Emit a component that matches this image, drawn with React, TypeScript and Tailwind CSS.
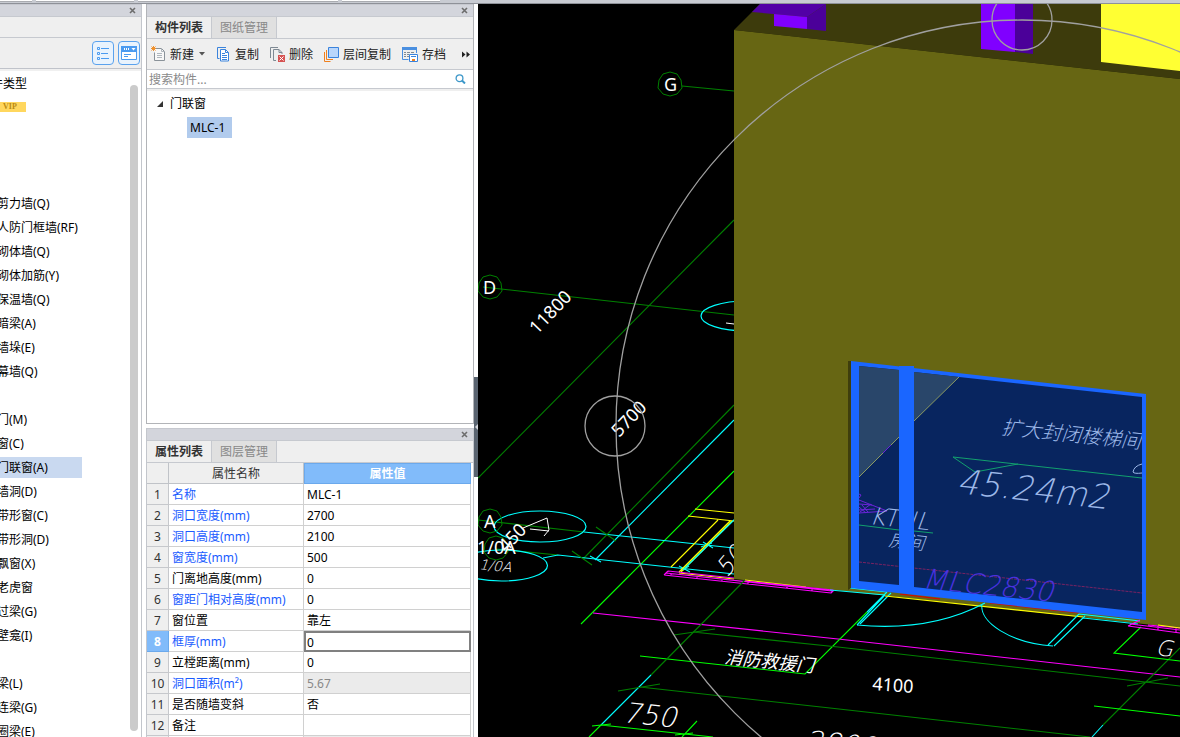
import type { ReactNode } from "react";

type Property = {
  name: string;
  value: string;
  common?: boolean;
  readOnly?: boolean;
};

const properties: Property[] = [
  { name: "名称", value: "MLC-1", common: true },
  { name: "洞口宽度(mm)", value: "2700", common: true },
  { name: "洞口高度(mm)", value: "2100", common: true },
  { name: "窗宽度(mm)", value: "500", common: true },
  { name: "门离地高度(mm)", value: "0" },
  { name: "窗距门相对高度(mm)", value: "0", common: true },
  { name: "窗位置", value: "靠左" },
  { name: "框厚(mm)", value: "0", common: true },
  { name: "立樘距离(mm)", value: "0" },
  { name: "洞口面积(m²)", value: "5.67", common: true, readOnly: true },
  { name: "是否随墙变斜", value: "否" },
  { name: "备注", value: "" },
  { name: "", value: "", readOnly: true },
];

const selectedRow = 7;

// an empty string keeps the height of a collapsed group header
const componentTypes = [
  "",
  "",
  "",
  "剪力墙(Q)",
  "人防门框墙(RF)",
  "砌体墙(Q)",
  "砌体加筋(Y)",
  "保温墙(Q)",
  "暗梁(A)",
  "墙垛(E)",
  "幕墙(Q)",
  "",
  "门(M)",
  "窗(C)",
  "门联窗(A)",
  "墙洞(D)",
  "带形窗(C)",
  "带形洞(D)",
  "飘窗(X)",
  "老虎窗",
  "过梁(G)",
  "壁龛(I)",
  "",
  "梁(L)",
  "连梁(G)",
  "圈梁(E)",
];

function TitleBar() {
  return (
    <div className="flex h-3 shrink-0 items-center justify-end border-t border-[#c6c8cf] bg-[#d3d5dc] pr-[5px]">
      <button type="button" aria-label="关闭" className="text-[#6d6d6d]">
        <svg className="block h-[7px] w-[7px]" viewBox="0 0 7 7" fill="none">
          <path d="M1 1l5 5M6 1L1 6" stroke="currentColor" strokeWidth="1.6" />
        </svg>
      </button>
    </div>
  );
}

function Tabs({ active, inactive }: { active: string; inactive: string }) {
  return (
    <div className="flex h-[23px] shrink-0 border-y border-[#c6c9cf] bg-[#efefef]">
      <button type="button" className="px-2 font-bold text-[#333]">
        {active}
      </button>
      <button
        type="button"
        className="border-x border-[#c6c9cf] bg-[#e0e0e0] px-2 text-[#888]"
      >
        {inactive}
      </button>
    </div>
  );
}

function ToolButton({ label, children }: { label: string; children: ReactNode }) {
  return (
    <button type="button" className="flex items-center gap-1 whitespace-nowrap">
      {children}
      <span className="pt-[2px]">{label}</span>
    </button>
  );
}

function TypePanel() {
  return (
    <aside className="flex w-[142px] shrink-0 flex-col overflow-hidden border-r border-[#c3c6cc] bg-white">
      <TitleBar />
      <div className="h-[22px] shrink-0 border-y border-[#c6c9cf] bg-[#efefef]" />
      <div className="flex h-[31px] shrink-0 items-center justify-end gap-1 border-b border-[#c0c3ca] bg-[#efefef] pr-[1px]">
        <button
          type="button"
          aria-label="列表视图"
          className="flex h-6 w-[22px] items-center justify-center rounded-[4px] border border-[#5aa2ee] bg-[#e9f3fd]"
        >
          <svg className="h-[14px] w-[14px]" viewBox="0 0 14 14" fill="none" stroke="#4b9bf0">
            <path d="M1.500 1.500h2v2h-2zM1.500 6.500h2v2h-2zM1.500 11.500h2v2h-2zM5 2.500h8M5 7.500h7M5 12.500h8" />
          </svg>
        </button>
        <button
          type="button"
          aria-label="窗口视图"
          className="flex h-6 w-[22px] items-center justify-center rounded-[4px] border border-[#5aa2ee] bg-[#e9f3fd]"
        >
          <svg className="h-[14px] w-4" viewBox="0 0 16 14" fill="none">
            <path d="M0.500 0.500h15v13h-15z" fill="#fff" stroke="#4b9bf0" />
            <path d="M0 0h16v6H0z" fill="#4b9bf0" />
            <path d="M3 3h1M5 3h1M7 3h1" stroke="#fff" strokeWidth="2" />
            <path d="M10.500 2h4l-2 2.500z" fill="#fff" />
            <path d="M3 8.500h7M3 10.500h4" stroke="#4b9bf0" />
          </svg>
        </button>
      </div>
      <div className="flex min-h-0 flex-1 border-t-2 border-[#f0f0f0]">
        <div className="min-w-0 flex-1 overflow-hidden">
          <p className="-ml-[9px] h-6 leading-[26px] whitespace-nowrap">件类型</p>
          <div className="flex h-6 items-center">
            <span className="h-[10px] w-[26px] bg-[#ffd75e] pl-[3px] font-['Liberation_Serif',serif] text-[8px] leading-[10px] font-bold text-[#b98a12]">
              VIP
            </span>
          </div>
          <ul>
            {componentTypes.map((type, i) => (
              <li key={i} className="flex h-6 items-center">
                <span
                  className={
                    type === "门联窗(A)"
                      ? "-ml-[3px] h-[21px] w-[85px] bg-[#c9d9f0] leading-[21px]"
                      : "-ml-[3px] pt-[2px] whitespace-nowrap"
                  }
                >
                  {type}
                </span>
              </li>
            ))}
          </ul>
        </div>
        <div className="mt-[14px] mr-[3px] mb-[6px] w-2 shrink-0 rounded-full bg-[#cbcbcb]" />
      </div>
    </aside>
  );
}

function ComponentPanel() {
  return (
    <section className="flex h-[420px] shrink-0 flex-col border border-t-0 border-[#b2b4b8] bg-white">
      <TitleBar />
      <Tabs active="构件列表" inactive="图纸管理" />
      <div className="flex h-[31px] shrink-0 items-center gap-[11px] border-b border-[#c6c9cf] bg-[#efefef] pr-[3px] pl-1 text-[#222]">
        <ToolButton label="新建">
          <svg className="h-4 w-[15px]" viewBox="0 0 15 16" fill="none">
            <path d="M4 2.500h6.500l3 3v9H3.500v-8" fill="#f8f8f8" stroke="#8a9299" />
            <path d="M10.500 2.500v3h3M6 7.500h5M6 9.500h5M6 11.500h5" stroke="#b0b7bd" />
            <path d="M0.500 0.500l4 4M4.500 0.500l-4 4M2.500 0v5M0 2.500h5" stroke="#f0922f" />
          </svg>
        </ToolButton>
        <svg className="-ml-[7px] h-1 w-2" viewBox="0 0 8 4">
          <path d="M1 0h6L4 3.500z" fill="#555" />
        </svg>
        <ToolButton label="复制">
          <svg className="h-[15px] w-[14px]" viewBox="0 0 14 15" fill="none" stroke="#3a83dc">
            <path d="M9 0.500H0.500v11h2" />
            <path d="M3.500 2.500h5l3 3v8.500h-8z" fill="#fff" />
            <path d="M8.500 2.500v3h3M5 6.500h3M5 8.500h5M5 10.500h5M5 12.500h5" />
          </svg>
        </ToolButton>
        <ToolButton label="删除">
          <svg className="h-[15px] w-[15px]" viewBox="0 0 15 15" fill="none" stroke="#7f8a94">
            <path d="M8 0.500H0.500V11M9 2.500l3 3v1.500M6 13.500H3.500v-11H9v3h3" />
            <path d="M8 8h7v7H8z" fill="#d65252" stroke="none" />
            <path d="M9.500 9.500l4 4M13.500 9.500l-4 4" stroke="#fff" />
          </svg>
        </ToolButton>
        <ToolButton label="层间复制">
          <svg className="h-[15px] w-[15px]" viewBox="0 0 15 15" fill="none">
            <path d="M0.500 5v9.500h6M2.500 3v9.500H9" stroke="#f0801e" />
            <path d="M4.500 0.500h10v10h-10z" fill="#b9d6fb" stroke="#3a83dc" />
          </svg>
        </ToolButton>
        <ToolButton label="存档">
          <svg className="h-[15px] w-4" viewBox="0 0 16 15" fill="none">
            <path d="M0.500 1v11.500h6M14.500 2v4" stroke="#4a8fe0" />
            <path d="M0 0h15v3H0z" fill="#4a8fe0" />
            <path d="M2 5.500h2M5 5.500h3M9 5.500h3M2 7.500h2M5 7.500h2M2 9.500h2M5 9.500h2" stroke="#7f8a94" />
            <path d="M7.500 7.500h8v7h-8z" fill="#fff" stroke="#3a83dc" />
            <path d="M9 9.500h5" stroke="#3a83dc" />
            <path d="M10 12h3v2h-3z" fill="#f0801e" />
          </svg>
        </ToolButton>
        <button type="button" aria-label="更多" className="ml-auto">
          <svg className="block h-[7px] w-2" viewBox="0 0 8 7" fill="#222">
            <path d="M0 0.500l3.500 3L0 6.500zM4.500 0.500L8 3.500l-3.500 3z" />
          </svg>
        </button>
      </div>
      <div className="flex h-[19px] shrink-0 items-center border-b border-[#c6c9cf]">
        <input
          type="text"
          aria-label="搜索构件"
          placeholder="搜索构件..."
          className="min-w-0 flex-1 pt-[2px] pl-[2px] outline-none placeholder:text-[#8a8a8a]"
        />
        <button type="button" aria-label="搜索" className="pr-[7px]">
          <svg className="block h-[10px] w-[11px]" viewBox="0 0 11 10" fill="none" stroke="#3c97c9">
            <circle cx="4.500" cy="4.200" r="3.400" strokeWidth="1.300" />
            <path d="M7 6.500l3 3" strokeWidth="2" />
          </svg>
        </button>
      </div>
      <ul className="flex-1 border-t-2 border-[#efefef]">
        <li>
          <div className="flex h-6 items-center gap-[7px] pt-[2px] pl-[10px]">
            <svg className="h-[6px] w-[6px]" viewBox="0 0 6 6">
              <path d="M6 0v6H0z" fill="#333" />
            </svg>
            <span>门联窗</span>
          </div>
          <ul>
            <li className="flex h-6 items-center pl-10">
              <span className="h-[21px] bg-[#b1cbed] pr-[7px] pl-[3px] leading-[21px]">MLC-1</span>
            </li>
          </ul>
        </li>
      </ul>
    </section>
  );
}

function PropertyPanel() {
  return (
    <section className="min-h-0 flex-1 overflow-hidden border-x border-[#c3c6cc] bg-white">
      <TitleBar />
      <Tabs active="属性列表" inactive="图层管理" />
      <div className="pr-[2px]">
        <table className="w-full table-fixed border-separate border-spacing-0">
          <thead>
            <tr className="h-[21px] bg-[#efefef]">
              <th className="w-[22px] border-r border-b border-[#c0c3c8]" />
              <th className="w-[135px] border-r border-b border-[#c0c3c8] pt-[2px] font-normal text-[#333]">
                属性名称
              </th>
              <th className="border border-[#6ba9ec] bg-[#81bbfa] font-bold text-white">属性值</th>
            </tr>
          </thead>
          <tbody>
            {properties.map((property, i) => (
              <tr key={i} className="h-[21px]">
                <td
                  className={
                    i === selectedRow
                      ? "border-r border-b border-[#6ba9ec] bg-[#81bbfa] px-0 pt-[2px] pb-0 text-center font-bold text-white"
                      : "border-r border-b border-[#c6c8cc] bg-[#efefef] px-0 pt-[2px] pb-0 text-center text-[#333]"
                  }
                >
                  {property.name && i + 1}
                </td>
                <td
                  className={
                    property.common
                      ? "border-r border-b border-[#d0d0d0] px-[3px] pt-[2px] pb-0 whitespace-nowrap text-[#1a5cff]"
                      : "border-r border-b border-[#d0d0d0] px-[3px] pt-[2px] pb-0 whitespace-nowrap"
                  }
                >
                  {property.name}
                </td>
                {i === selectedRow ? (
                  <td className="border-2 border-[#808080] p-0">
                    <input
                      type="text"
                      aria-label={property.name}
                      defaultValue={property.value}
                      className="block h-[17px] w-full pt-[1px] pl-[1px] outline-none"
                    />
                  </td>
                ) : (
                  <td
                    className={
                      property.readOnly
                        ? "border-r border-b border-[#d0d0d0] bg-[#ebebeb] px-[3px] pt-[2px] pb-0 text-[#888]"
                        : "border-r border-b border-[#d0d0d0] px-[3px] pt-[2px] pb-0"
                    }
                  >
                    {property.value}
                  </td>
                )}
              </tr>
            ))}
          </tbody>
        </table>
      </div>
    </section>
  );
}

const GREEN = "#008000";
const LIME = "#00ff00";
const CYAN = "#00ffff";
const YELLOW = "#ffff00";
const MAGENTA = "#ff00ff";

// plan lines that the building hides
const planBack: [string, string][] = [
  [GREEN, "M682 86L734 91"],
  [GREEN, "M483 287L734 315"],
  [GREEN, "M478 478L734 220"],
  [GREEN, "M734 405L583 559"],
  [CYAN, "M734 420L595 560"],
  [LIME, "M734 471L581 624"],
  [GREEN, "M478 520L584 532"],
  [CYAN, "M584 532L734 548"],
  [GREEN, "M496 549L558 555"],
  [CYAN, "M543 558L558 555L734 574"],
  [GREEN, "M596 527L616 541M572 551L592 565"],
  [CYAN, "M703 542L713 548M679 566L690 572M590 556L601 562M701 547L712 543M681 571L689 566"],
  [YELLOW, "M695 509L734 513M688 516L734 521M718 520L671 567M730 521L679 572M732 521L681 572"],
  [CYAN, "M735 519L683 570"],
  [YELLOW, "M679 573L734 579"],
];

// plan lines in front of the facade
const planFront: [string, string][] = [
  [YELLOW, "M745 580L806 587"],
  [
    MAGENTA,
    "M664 575L831 593M666 573L832 591M668 571L734 578M745 581L833 590M664 575L668 571M831 593L834 590M787 588L787 586M671 573V575M697 576V578M722 579V581M748 582V584M772 584V586M812 589V591",
  ],
  [CYAN, "M830 590L885 595M850 588L887 592"],
  [MAGENTA, "M593 613L838 639L1180 677"],
  [CYAN, "M885 595L857 625M891 593L860 624M887 592L867 612"],
  [LIME, "M867 612L805 674L640 656"],
  [GREEN, "M745 580L651 675"],
  [CYAN, "M651 675L601 725"],
  [LIME, "M601 725L589 737"],
  [GREEN, "M693 632L838 647L1180 686M674 635L715 629"],
  [GREEN, "M640 687L830 708L1090 737M618 691L660 684"],
  [LIME, "M601 725L713 737M592 726L611 724M697 721L682 737M675 735L693 733"],
  [YELLOW, "M885 596L1083 617"],
  ["#e00000", "M900 594L940 599M990 603L1080 613"],
  [CYAN, "M857 625Q930 632 985 603M982 604C979 622 1010 643 1053 646"],
  [CYAN, "M1079 614L1048 645M1085 616L1054 646M1079 614L1140 621M1083 618L1138 624"],
  [GREEN, "M1180 648L1103 725M1127 686L1168 678"],
  [CYAN, "M1103 725L1092 737"],
  [LIME, "M1094 706L1180 716M1141 627L1114 653L1180 661"],
  [MAGENTA, "M1128 626L1180 633M1130 624L1180 630M1128 626L1140 620M1148 625L1180 628M1158 626V630M1176 628V632"],
  [YELLOW, "M1158 625L1180 628"],
];

function Lines({ items }: { items: [string, string][] }) {
  return (
    <g fill="none" strokeWidth="1.1">
      {items.map(([stroke, d], i) => (
        <path key={i} d={d} stroke={stroke} />
      ))}
    </g>
  );
}

function AxisMark({ x, y }: { x: number; y: number }) {
  return (
    <polygon
      transform={`translate(${x} ${y})`}
      points="0,-12 7,-10 11,-4 12,4 7,10 0,12 -7,10 -12,4 -11,-4 -7,-10"
      fill="none"
      stroke={GREEN}
    />
  );
}

function Viewport() {
  return (
    <main className="min-w-0 flex-1 bg-black">
      <svg
        className="block h-full w-full"
        viewBox="478 4 702 733"
        preserveAspectRatio="xMinYMin slice"
        role="img"
        aria-label="三维视图"
      >
        <Lines items={planBack} />
        <g fill="none" stroke={CYAN} strokeWidth="1.2">
          <ellipse cx="540" cy="526.500" rx="46" ry="15.500" />
          <ellipse cx="501.500" cy="565.500" rx="46" ry="15.500" />
          <ellipse cx="747" cy="316" rx="46" ry="15" />
        </g>
        <path d="M523 528L547 518L549 530L544 536M530 529L549 531M726 323L734 324" fill="none" stroke="#fff" />
        <AxisMark x={670} y={84} />
        <AxisMark x={490} y={287} />
        <AxisMark x={490} y={521} />
        <AxisMark x={496} y={548} />
        <g className="text-[18px]" fill="#fff">
          <text x="664" y="91">G</text>
          <text x="483" y="294">D</text>
          <text x="484" y="528">A</text>
          <text x="477" y="554">1/0A</text>
          <text transform="translate(537 335) rotate(-46)">11800</text>
          <text transform="translate(619 438) rotate(-46)">5700</text>
          <text transform="translate(506 553) rotate(-46)">450</text>
        </g>
        <g className="font-['DejaVu_Sans_Light','DejaVu_Sans',sans-serif] font-extralight italic" fill="#fff">
          <text className="text-[14px]" transform="translate(479 569) rotate(6)">1/0A</text>
          <text className="text-[24px]" transform="translate(727 578) rotate(-50)">50</text>
        </g>

        {/* facade and roof */}
        <path d="M734 30L760 4H1180V79z" fill="#3d3b0c" />
        <path d="M734 30L1180 79V628L734 579z" fill="#676613" />
        <path d="M760 4H826L807 17L752 12z" fill="#5200a6" />
        <path d="M826 4V31L807 29V17z" fill="#4b0099" />
        <path d="M774 14L807 17V29L774 26z" fill="#8000ff" />
        <path d="M981 4H1015V52L981 49z" fill="#8000ff" />
        <path d="M1015 4H1033V54L1015 52z" fill="#4b0099" />
        <path d="M1101 4H1180V71L1101 62z" fill="#ffff33" />

        <Lines items={planFront} />

        {/* door-window */}
        <path d="M848 361H851V588L848 590z" fill="#3f3e0c" />
        <path d="M851 361L1146 394V620L851 588z" fill="#1a66ff" />
        <path d="M859 366L899 370V585L859 581z" fill="#08255f" />
        <path d="M914 372L1142 397V612L914 587z" fill="#08255f" />
        <path d="M859 366L899 370V437L859 477z" fill="#29466a" />
        <path d="M914 372L959 377L914 421z" fill="#29466a" />
        <path d="M859 477L899 437M914 421L959 377" stroke="#8b9a62" />
        <path d="M883 453L891 445" stroke="#6a24d8" />
        <g fill="none">
          <path d="M953 457L975 472L1018 464M953 457L1142 478M859 525L899 530M914 531L933 533" stroke="#12a06e" />
          <path
            d="M859 500L887 511L859 513M859 504L872 505M860 512L871 504M859 507L866 513M859 510L875 509M862 505L868 512M859 494L861 495L859 498"
            stroke="#6a24d8"
          />
          <path d="M859 562L1142 593" stroke="#7a2262" strokeDasharray="3 1" />
        </g>
        <g className="italic" fill="#9db8e8">
          <text className="text-[20px] font-light" transform="translate(1001 434) rotate(6)">
            扩大封闭楼梯间
          </text>
          <text className="text-[18px] font-light" transform="translate(888 546) rotate(6)">
            房间
          </text>
        </g>
        <g className="font-['DejaVu_Sans_Light','DejaVu_Sans',sans-serif] font-extralight italic">
          <text className="text-[34px]" transform="translate(956 493) rotate(6)" fill="#9db8e8">
            45.24m2
          </text>
          <text className="text-[24px]" transform="translate(869 524) rotate(6)" fill="#9db8e8">
            KTNL
          </text>
          <text className="text-[28px]" transform="translate(922 588) rotate(6)" fill="#4a32e0">
            MLC2830
          </text>
        </g>
        <path d="M1142 464Q1134 466 1133 472Q1134 474 1142 473" fill="none" stroke="#9db8e8" />
        <path d="M899 366H914V593H899zM1142 394L1146 394V618H1142z" fill="#1a66ff" />

        <g className="font-['DejaVu_Sans_Light','DejaVu_Sans',sans-serif] font-extralight italic" fill="#fff">
          <text className="text-[28px]" transform="translate(622 722) rotate(6)">750</text>
          <text className="text-[28px]" transform="translate(804 750) rotate(6)">2800</text>
          <text className="text-[22px]" transform="translate(1155 655) rotate(6)">G</text>
        </g>
        <text className="text-[18px] italic" transform="translate(724 663) rotate(6)" fill="#fff">
          消防救援门
        </text>
        <text className="text-[18px]" transform="translate(872 690) rotate(4)" fill="#fff">
          4100
        </text>

        {/* orbit handle */}
        <g fill="none" stroke="#a0a0a0" strokeWidth="1.3">
          <circle cx="1022" cy="426" r="406" />
          <circle cx="1022" cy="20" r="30" />
          <circle cx="615" cy="426" r="30" />
        </g>
      </svg>
    </main>
  );
}

export default function App() {
  return (
    <div className="flex h-screen flex-col overflow-hidden bg-white font-['Noto_Sans','Noto_Sans_CJK_SC',sans-serif] text-[12px] leading-4 text-black">
      <header className="flex h-1 shrink-0 gap-1 border-b border-[#8e9198] bg-[#c8cbd2]">
        <div className="h-[2px] w-8 border-b border-[#a9abb0] bg-white" />
        <div className="h-[2px] w-[98px] border-b border-[#a9abb0] bg-white" />
        <div className="h-[2px] w-[200px] border-b border-[#a9abb0] bg-white" />
        <div className="h-[2px] w-[98px] border-b border-[#a9abb0] bg-white" />
      </header>
      <div className="flex min-h-0 flex-1">
        <TypePanel />
        <div className="ml-1 flex w-[328px] shrink-0 flex-col gap-1">
          <ComponentPanel />
          <PropertyPanel />
        </div>
        <div className="flex w-1 shrink-0 items-center pt-28">
          <button
            type="button"
            aria-label="收起面板"
            className="flex h-[100px] w-1 items-center justify-center bg-[#5a6470]"
          >
            <svg className="h-[6px] w-[3px]" viewBox="0 0 3 6">
              <path d="M3 0v6L0 3z" fill="#d3d5dc" />
            </svg>
          </button>
        </div>
        <Viewport />
      </div>
    </div>
  );
}
